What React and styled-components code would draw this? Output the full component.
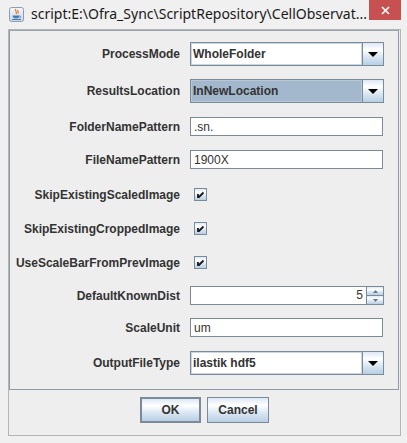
import React from 'react'
import styled, { createGlobalStyle } from 'styled-components'

const GlobalStyle = createGlobalStyle`
  html, body {
    margin: 0;
    padding: 0;
  }
  body {
    background: #f0f0f0;
    font-family: "Liberation Sans", Arial, sans-serif;
  }
`

const oceanGradient = 'linear-gradient(to bottom, #dde8f3 0%, #ffffff 30%, #dde8f3 60%, #b8cfe5 100%)'

const Window = styled.div`
  width: 407px;
  height: 443px;
  display: flex;
  flex-direction: column;
  background: #f0f0f0;
`

const TitleBar = styled.div`
  height: 29px;
  flex-shrink: 0;
  display: flex;
  align-items: flex-start;
`

const TitleIcon = styled.svg`
  margin: 7px 0 0 9px;
  flex-shrink: 0;
`

const TitleText = styled.div`
  flex: 1;
  margin-left: 7px;
  line-height: 28px;
  font-family: "Noto Sans", "Open Sans", sans-serif;
  font-size: 14px;
  color: #1a1a1a;
  white-space: nowrap;
  overflow: hidden;
`

const CloseButton = styled.div`
  width: 32px;
  height: 20px;
  margin-right: 6px;
  background: #c75050;
  display: flex;
  align-items: center;
  justify-content: center;
  flex-shrink: 0;
`

const Client = styled.div`
  flex: 1;
  margin: 0 6px 7px 8px;
  border: 1px solid #b4b4b4;
  background: #eeeeee;
  display: flex;
  flex-direction: column;
`

const FormPanel = styled.div`
  margin-right: 1px;
  border: 1px solid #8e99a4;
  border-top-color: #9aa4ae;
  padding-bottom: 14px;
  display: flex;
  flex-direction: column;
`

const Row = styled.div`
  display: grid;
  grid-template-columns: 170px 194px;
  column-gap: 10px;
  align-items: center;
  height: ${p => p.$h}px;
  margin-top: ${p => p.$top}px;
`

const Label = styled.div`
  text-align: right;
  font-size: 12px;
  font-weight: bold;
  color: #333333;
  white-space: nowrap;
`

const Combo = styled.div`
  height: 24px;
  box-sizing: border-box;
  border: 1px solid #7a8a99;
  display: flex;
`

const ComboValue = styled.div`
  flex: 1;
  display: flex;
  align-items: center;
  padding-left: 2px;
  font-size: 12px;
  font-weight: bold;
  color: #333333;
  background: ${p => (p.$selected ? '#a3b8cc' : '#ffffff')};
  box-shadow: inset 0 0 0 1px ${p => (p.$selected ? '#b6c7d8' : '#c9d7e5')};
`

const ArrowButton = styled.div`
  width: 20px;
  border-left: 1px solid #7a8a99;
  background: ${oceanGradient};
  display: flex;
  align-items: center;
  justify-content: center;
`

const TextField = styled.div`
  height: 19px;
  box-sizing: border-box;
  width: 193px;
  border: 1px solid #7a8a99;
  background: #ffffff;
  display: flex;
  align-items: center;
  padding: 0 3px;
  font-size: 12px;
  color: #333333;
`

const Spinner = styled.div`
  height: 19px;
  box-sizing: border-box;
  border: 1px solid #7a8a99;
  display: flex;
  background: #ffffff;
`

const SpinnerValue = styled.div`
  flex: 1;
  text-align: right;
  padding-right: 3px;
  font-size: 12px;
  line-height: 17px;
  color: #333333;
`

const SpinButtons = styled.div`
  width: 16px;
  border-left: 1px solid #7a8a99;
  display: flex;
  flex-direction: column;
`

const SpinButton = styled.div`
  flex: 1;
  background: ${oceanGradient};
  display: flex;
  align-items: center;
  justify-content: center;
  & + & {
    border-top: 1px solid #7a8a99;
  }
`

const CheckBox = styled.div`
  width: 13px;
  height: 13px;
  margin-left: 4px;
  box-sizing: border-box;
  border: 1px solid #7a8a99;
  background: ${oceanGradient};
  display: flex;
  align-items: center;
  justify-content: center;
`

const ButtonBar = styled.div`
  display: flex;
  justify-content: center;
  gap: 6px;
  margin-top: 7px;
`

const Button = styled.div`
  width: ${p => p.$w}px;
  height: 26px;
  box-sizing: border-box;
  border: ${p => (p.$default ? '2px solid #7a8a99' : '1px solid #7a8a99')};
  background: ${oceanGradient};
  display: flex;
  align-items: center;
  justify-content: center;
  font-size: 12px;
  font-weight: bold;
  color: #333333;
`

const DownArrow = () => (
  <svg width="10" height="5" viewBox="0 0 10 5">
    <polygon points="0,0 10,0 5,5" fill="#000" />
  </svg>
)

const Tick = () => (
  <svg width="11" height="11" viewBox="0 0 11 11">
    <path d="M3 5 L3 9 M3.5 8.5 L8.5 3.5" stroke="#1a1a1a" strokeWidth="1.8" fill="none" />
  </svg>
)

const SmallArrow = ({ up }) => (
  <svg width="5" height="3" viewBox="0 0 5 3">
    <polygon points={up ? '0,3 5,3 2.5,0' : '0,0 5,0 2.5,3'} fill="#6b7784" />
  </svg>
)

const JavaIcon = () => (
  <TitleIcon width="15" height="15" viewBox="0 0 15 15">
    <defs>
      <linearGradient id="jbg" x1="0" y1="0" x2="0" y2="1">
        <stop offset="0" stopColor="#f4f7fb" />
        <stop offset="1" stopColor="#c9d6e6" />
      </linearGradient>
    </defs>
    <rect x="0.5" y="0.5" width="14" height="14" rx="2" fill="url(#jbg)" stroke="#8c9db3" />
    <path d="M7 2 C5 4 9 5 7 7 M9 3 C8 4.5 10 5 9 6.5" stroke="#e07b20" strokeWidth="1.2" fill="none" />
    <path d="M3.5 8.5 H10.5 C10.5 10.5 9 11.5 7 11.5 C5 11.5 3.5 10.5 3.5 8.5 Z" fill="#4a78b0" />
    <path d="M10.5 9 C12 9 12 10.5 10.2 10.8" stroke="#4a78b0" strokeWidth="0.9" fill="none" />
    <rect x="3" y="12" width="9" height="1" fill="#4a78b0" />
  </TitleIcon>
)

const rows = [
  { label: 'ProcessMode', type: 'combo', value: 'WholeFolder', top: 11, h: 24 },
  { label: 'ResultsLocation', type: 'combo', value: 'InNewLocation', selected: true, top: 13, h: 24 },
  { label: 'FolderNamePattern', type: 'text', value: '.sn.', top: 14, h: 19 },
  { label: 'FileNamePattern', type: 'text', value: '1900X', top: 14, h: 19 },
  { label: 'SkipExistingScaledImage', type: 'check', top: 15, h: 21 },
  { label: 'SkipExistingCroppedImage', type: 'check', top: 13, h: 21 },
  { label: 'UseScaleBarFromPrevImage', type: 'check', top: 13, h: 21 },
  { label: 'DefaultKnownDist', type: 'spinner', value: '5', top: 13, h: 19 },
  { label: 'ScaleUnit', type: 'text', value: 'um', top: 13, h: 19 },
  { label: 'OutputFileType', type: 'combo', value: 'ilastik hdf5', top: 14, h: 24 },
]

const Field = ({ row }) => {
  switch (row.type) {
    case 'combo':
      return (
        <Combo>
          <ComboValue $selected={row.selected}>{row.value}</ComboValue>
          <ArrowButton><DownArrow /></ArrowButton>
        </Combo>
      )
    case 'text':
      return <TextField>{row.value}</TextField>
    case 'check':
      return <CheckBox><Tick /></CheckBox>
    case 'spinner':
      return (
        <Spinner>
          <SpinnerValue>{row.value}</SpinnerValue>
          <SpinButtons>
            <SpinButton><SmallArrow up /></SpinButton>
            <SpinButton><SmallArrow /></SpinButton>
          </SpinButtons>
        </Spinner>
      )
    default:
      return null
  }
}

export default function App() {
  return (
    <>
      <GlobalStyle />
      <Window>
        <TitleBar>
          <JavaIcon />
          <TitleText>script:E:\Ofra_Sync\ScriptRepository\CellObservat...</TitleText>
          <CloseButton>
            <svg width="9" height="9" viewBox="0 0 9 9">
              <path d="M1 1 L8 8 M8 1 L1 8" stroke="#fff" strokeWidth="1.6" />
            </svg>
          </CloseButton>
        </TitleBar>
        <Client>
          <FormPanel>
            {rows.map(row => (
              <Row key={row.label} $top={row.top} $h={row.h}>
                <Label>{row.label}</Label>
                <Field row={row} />
              </Row>
            ))}
          </FormPanel>
          <ButtonBar>
            <Button $w={61} $default>OK</Button>
            <Button $w={62}>Cancel</Button>
          </ButtonBar>
        </Client>
      </Window>
    </>
  )
}
